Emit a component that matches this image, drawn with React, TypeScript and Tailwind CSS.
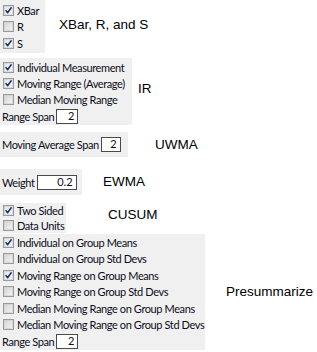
import React from "react";

const uiFont = { fontFamily: 'Lato, "Noto Sans", sans-serif' };
const labelFont = { fontFamily: '"Liberation Sans", Arial, sans-serif' };

function Box({ checked }: { checked: boolean }) {
  return (
    <svg width="11" height="11" viewBox="0 0 11 11" className="shrink-0">
      <defs>
        <linearGradient id={checked ? "gc" : "gu"} x1="0" y1="0" x2="1" y2="1">
          <stop offset="0" stopColor={checked ? "#e4e4e4" : "#d4d4d4"} />
          <stop offset="1" stopColor={checked ? "#fafafa" : "#f4f4f4"} />
        </linearGradient>
      </defs>
      <rect x="0.5" y="0.5" width="10" height="10" fill="#f4f4f4" stroke="#9a9a9a" />
      <rect x="1.5" y="1.5" width="8" height="8" fill={`url(#${checked ? "gc" : "gu"})`} stroke="#c8c8c8" strokeWidth="0.6" />
      {checked && (
        <path d="M3 5.6 L4.6 7.8 L8.2 2.8" fill="none" stroke="#1e2f6a" strokeWidth="1.5" strokeLinecap="round" strokeLinejoin="round" />
      )}
    </svg>
  );
}

function Check({ checked, label }: { checked: boolean; label: string }) {
  return (
    <div className="flex items-center h-[16.5px] pl-[3px] gap-[3px] whitespace-nowrap">
      <Box checked={checked} />
      <span className="text-[11px] tracking-[-0.4px] text-[#0c0c20] leading-none">{label}</span>
    </div>
  );
}

function Field({ label, value, width }: { label: string; value: string; width: string }) {
  return (
    <div className="flex items-center h-[17px] pl-[2px] gap-[2px] whitespace-nowrap">
      <span className="text-[11px] tracking-[-0.4px] text-[#0c0c20] leading-none">{label}</span>
      <div className={`${width} h-[15px] bg-white border border-[#4a4a4a] flex items-center justify-end pr-[3px] text-[11px] text-[#0c0c20]`}>
        {value}
      </div>
    </div>
  );
}

function Label({ children, className }: { children: React.ReactNode; className: string }) {
  return (
    <span style={labelFont} className={`text-[13.5px] text-black leading-none whitespace-nowrap ${className}`}>
      {children}
    </span>
  );
}

export default function App() {
  return (
    <div style={uiFont} className="w-[317px] h-[352px] bg-white overflow-hidden flex flex-col">
      <div className="flex items-center">
        <div className="w-[45px] h-[53px] bg-[#f0f0f0] flex flex-col pt-[2px] shrink-0">
          <Check checked label="XBar" />
          <Check checked={false} label="R" />
          <Check checked label="S" />
        </div>
        <Label className="ml-[14px] -mt-[4px]">XBar, R, and S</Label>
      </div>

      <div className="flex items-center mt-[5px]">
        <div className="w-[132px] h-[67px] bg-[#f0f0f0] flex flex-col pt-[1px] shrink-0">
          <Check checked label="Individual Measurement" />
          <Check checked label="Moving Range (Average)" />
          <Check checked={false} label="Median Moving Range" />
          <Field label="Range Span" value="2" width="w-[22px]" />
        </div>
        <Label className="ml-[6px] -mt-[6px]">IR</Label>
      </div>

      <div className="flex items-center mt-[7px]">
        <div className="w-[128px] h-[25px] bg-[#f0f0f0] flex flex-col justify-center shrink-0">
          <Field label="Moving Average Span" value="2" width="w-[20px]" />
        </div>
        <Label className="ml-[27px]">UWMA</Label>
      </div>

      <div className="flex items-center mt-[12px]">
        <div className="w-[82px] h-[26px] bg-[#f0f0f0] flex flex-col justify-center shrink-0">
          <Field label="Weight" value="0.2" width="w-[40px]" />
        </div>
        <Label className="ml-[21px]">EWMA</Label>
      </div>

      <div className="flex items-center mt-[8px]">
        <div className="w-[66px] h-[30px] bg-[#f0f0f0] flex flex-col pt-[0px] shrink-0">
          <Check checked label="Two Sided" />
          <Check checked={false} label="Data Units" />
        </div>
        <Label className="ml-[42px] -mt-[6px]">CUSUM</Label>
      </div>

      <div className="flex items-center mt-[1px]">
        <div className="w-[205px] h-[116px] bg-[#f0f0f0] flex flex-col pt-[0px] shrink-0">
          <Check checked label="Individual on Group Means" />
          <Check checked={false} label="Individual on Group Std Devs" />
          <Check checked label="Moving Range on Group Means" />
          <Check checked={false} label="Moving Range on Group Std Devs" />
          <Check checked={false} label="Median Moving Range on Group Means" />
          <Check checked={false} label="Median Moving Range on Group Std Devs" />
          <Field label="Range Span" value="2" width="w-[22px]" />
        </div>
        <Label className="ml-[21px]">Presummarize</Label>
      </div>
    </div>
  );
}
